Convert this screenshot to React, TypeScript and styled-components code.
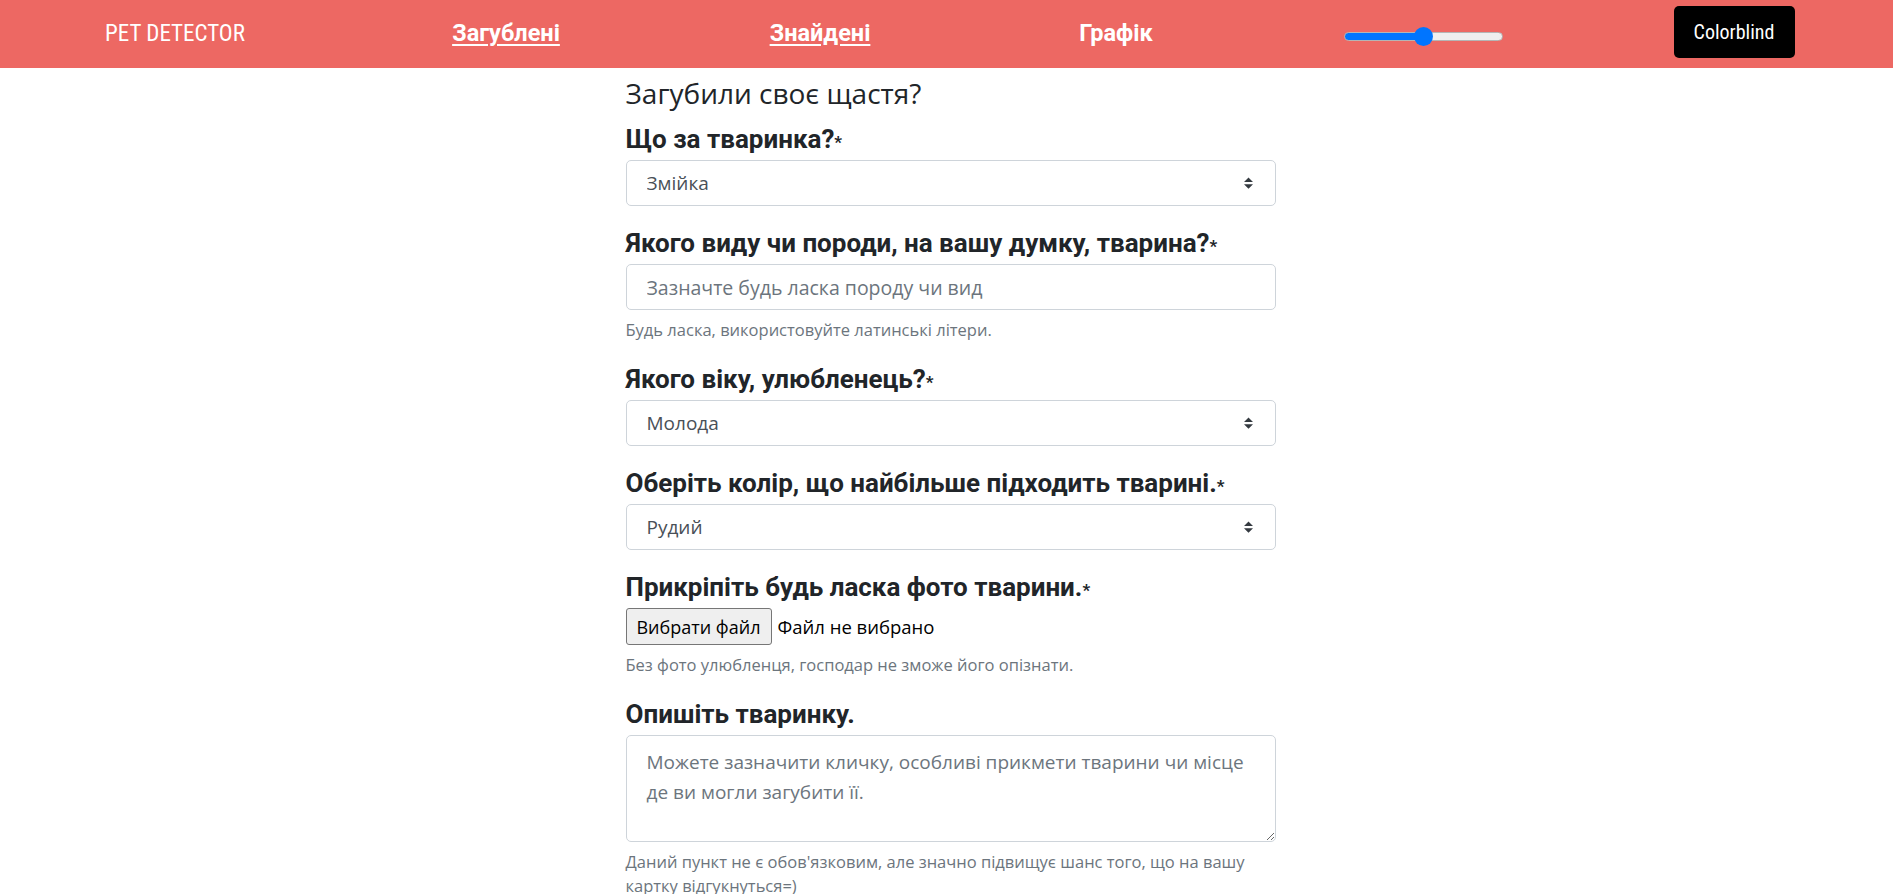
import React from 'react';
import styled, { createGlobalStyle } from 'styled-components';

const CONDENSED = `"Roboto Condensed", "Liberation Sans Narrow", "Liberation Sans", Arial, sans-serif`;
const ROBOTO = `Roboto, "Liberation Sans", Arial, sans-serif`;
const BODY = `"Open Sans", "Noto Sans", sans-serif`;

const GlobalStyle = createGlobalStyle`
  html, body { margin: 0; padding: 0; background: #fff; }
  body { font-family: ${BODY}; color: #212529; }
  *, *::before, *::after { box-sizing: border-box; }
`;

const Header = styled.header`
  height: 68px;
  background: #ed6863;
  display: grid;
  grid-template-columns: 350px 312px 316px 276px 338px 284px;
  align-items: center;
  justify-items: center;
`;

const Brand = styled.div`
  font-family: ${CONDENSED};
  font-size: 23px;
  color: #fff;
  margin-top: -2px;
`;

const NavLink = styled.a<{ $underline?: boolean }>`
  font-family: ${ROBOTO};
  font-size: 23.5px;
  font-weight: 700;
  color: #fff;
  text-decoration: ${(p) => (p.$underline ? 'underline' : 'none')};
  text-underline-offset: 3px;
  margin-top: -2px;
  cursor: pointer;
`;

const Range = styled.input`
  -webkit-appearance: none;
  appearance: none;
  width: 159px;
  height: 9px;
  margin: 4px 0 0 0;
  border-radius: 5px;
  border: 1px solid #b5b5b5;
  background: linear-gradient(to right, #0075ff 0, #0075ff 50%, #efefef 50%, #efefef 100%);
  outline: none;
  &::-webkit-slider-thumb {
    -webkit-appearance: none;
    appearance: none;
    width: 19px;
    height: 19px;
    border-radius: 50%;
    background: #0075ff;
    border: none;
  }
`;

const ColorblindButton = styled.button`
  width: 121px;
  height: 52px;
  margin-top: -5px;
  background: #000;
  color: #fff;
  border: none;
  border-radius: 5px;
  font-family: ${CONDENSED};
  font-size: 20px;
  cursor: pointer;
`;

const Main = styled.main`
  width: 658px;
  margin: 0 auto;
  padding: 8px 0 40px 8px;
`;

const Title = styled.h3`
  margin: 0 0 14px 0;
  font-size: 28px;
  font-weight: 400;
  line-height: 34px;
  color: #212529;
`;

const FormGroup = styled.div`
  margin-bottom: 22px;
`;

const Label = styled.label`
  display: block;
  font-family: ${ROBOTO};
  font-weight: 700;
  font-size: 26px;
  line-height: 30px;
  margin-bottom: 6px;
  color: #212529;
`;

const Star = styled.span`
  font-size: 17px;
  line-height: 1;
`;

const controlBase = `
  display: block;
  width: 100%;
  border: 1px solid #ced4da;
  border-radius: 5px;
  background: #fff;
  font-family: ${BODY};
  font-size: 19px;
  color: #495057;
  padding: 0 20px;
  outline: none;
`;

const SelectWrap = styled.div`
  position: relative;
`;

const Select = styled.select`
  ${controlBase}
  height: 46px;
  -webkit-appearance: none;
  appearance: none;
`;

const SelectArrow = styled.svg`
  position: absolute;
  right: 23px;
  top: 50%;
  width: 9px;
  height: 12px;
  transform: translateY(-50%);
  pointer-events: none;
`;

const TextInput = styled.input`
  ${controlBase}
  height: 46px;
  font-size: 19.5px;
  &::placeholder { color: #6c757d; }
`;

const TextArea = styled.textarea`
  ${controlBase}
  height: 107px;
  padding: 11px 20px;
  line-height: 30px;
  resize: vertical;
  &::placeholder { color: #6c757d; }
`;

const Help = styled.small`
  display: block;
  margin-top: 8px;
  font-size: 16.5px;
  line-height: 24px;
  color: #6c757d;
`;

const FileRow = styled.div`
  display: flex;
  align-items: center;
  gap: 6px;
`;

const FileButton = styled.button`
  width: 146px;
  height: 37px;
  background: #efefef;
  border: 1px solid #767676;
  border-radius: 3px;
  font-family: ${BODY};
  font-size: 18px;
  color: #000;
  padding: 0;
`;

const FileName = styled.span`
  font-size: 18.5px;
  color: #000;
`;

const Arrow = () => (
  <SelectArrow viewBox="0 0 4 5">
    <path d="M2 0L0 2h4zm0 5L0 3h4z" fill="#343a40" />
  </SelectArrow>
);

const SelectField = ({ options }: { options: string[] }) => (
  <SelectWrap>
    <Select defaultValue={options[0]}>
      {options.map((o) => (
        <option key={o}>{o}</option>
      ))}
    </Select>
    <Arrow />
  </SelectWrap>
);

export default function App() {
  return (
    <>
      <GlobalStyle />
      <Header>
        <Brand>PET DETECTOR</Brand>
        <NavLink $underline>Загублені</NavLink>
        <NavLink $underline>Знайдені</NavLink>
        <NavLink>Графік</NavLink>
        <Range type="range" min={0} max={100} defaultValue={50} />
        <ColorblindButton>Colorblind</ColorblindButton>
      </Header>
      <Main>
        <Title>Загубили своє щастя?</Title>
        <FormGroup>
          <Label>Що за тваринка?<Star>*</Star></Label>
          <SelectField options={['Змійка', 'Собака', 'Кіт', 'Папуга']} />
        </FormGroup>
        <FormGroup>
          <Label>Якого виду чи породи, на вашу думку, тварина?<Star>*</Star></Label>
          <TextInput placeholder="Зазначте будь ласка породу чи вид" />
          <Help>Будь ласка, використовуйте латинські літери.</Help>
        </FormGroup>
        <FormGroup>
          <Label>Якого віку, улюбленець?<Star>*</Star></Label>
          <SelectField options={['Молода', 'Доросла', 'Стара']} />
        </FormGroup>
        <FormGroup>
          <Label>Оберіть колір, що найбільше підходить тварині.<Star>*</Star></Label>
          <SelectField options={['Рудий', 'Чорний', 'Білий', 'Сірий']} />
        </FormGroup>
        <FormGroup>
          <Label>Прикріпіть будь ласка фото тварини.<Star>*</Star></Label>
          <FileRow>
            <FileButton>Вибрати файл</FileButton>
            <FileName>Файл не вибрано</FileName>
          </FileRow>
          <Help>Без фото улюбленця, господар не зможе його опізнати.</Help>
        </FormGroup>
        <FormGroup>
          <Label>Опишіть тваринку.</Label>
          <TextArea placeholder={'Можете зазначити кличку, особливі прикмети тварини чи місце\nде ви могли загубити її.'} />
          <Help>
            Даний пункт не є обов'язковим, але значно підвищує шанс того, що на вашу
            <br />
            картку відгукнуться=)
          </Help>
        </FormGroup>
      </Main>
    </>
  );
}
